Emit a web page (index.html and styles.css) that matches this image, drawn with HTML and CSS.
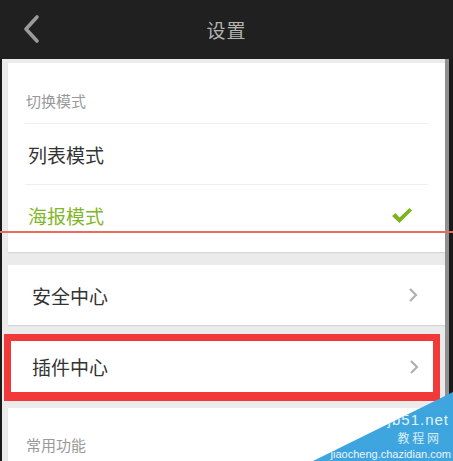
FILE: index.html
```html
<!DOCTYPE html>
<html lang="zh-CN">
<head>
  <meta charset="UTF-8" />
  <meta name="viewport" content="width=device-width, initial-scale=1.0"/>
  <title>设置</title>
  <link rel="stylesheet" href="styles.css">
</head>
<body>

<header>
  <div class="back">
    <svg width="20" height="30" viewBox="0 0 20 30"><polyline points="15,3 4,15 15,27" fill="none" stroke="#9a9a9a" stroke-width="3.6" stroke-linecap="round" stroke-linejoin="round"/></svg>
  </div>
  <h3>设置</h3>
</header>

<div class="app">
  <div class="main">
    <div class="card mode-card">
      <div class="label">切换模式</div>
      <div class="row">列表模式</div>
      <div class="row active">
        <span>海报模式</span>
        <svg class="check" width="22" height="17" viewBox="0 0 22 17"><path d="M1 9 L4.5 6 L8.5 10.5 L18.5 1 L21 3.5 L8.5 16 Z" fill="#7db31f"/></svg>
      </div>
    </div>

    <div class="card link">
      <span>安全中心</span>
      <svg width="10" height="16" viewBox="0 0 10 16"><polyline points="2,2 8,8 2,14" fill="none" stroke="#b0b0b0" stroke-width="2.2"/></svg>
    </div>

    <div class="highlight">
      <div class="card link inner">
        <span>插件中心</span>
        <svg width="10" height="16" viewBox="0 0 10 16"><polyline points="2,2 8,8 2,14" fill="none" stroke="#b0b0b0" stroke-width="2.2"/></svg>
      </div>
    </div>

    <div class="card last">
      <div class="label">常用功能</div>
    </div>
  </div>
  <div class="scrollbar"></div>
</div>

<div class="red-line"></div>

<div class="watermark">
  <div class="wm-site">jb51.net</div>
  <div class="wm-name">教 程 网</div>
  <div class="wm-url">jiaocheng.chazidian.com</div>
</div>

</body>
</html>
```

FILE: styles.css
```css
body {
  margin: 0;
  width: 453px;
  height: 461px;
  overflow: hidden;
  position: relative;
  font-family: "Noto Sans CJK SC", "Noto Sans", sans-serif;
  background: #ebebeb;
  color: #333;
}
header {
  height: 59px;
  background: #202020;
  display: flex;
  align-items: center;
  justify-content: center;
  position: relative;
}
header h3 {
  margin: 0;
  font-weight: normal;
  font-size: 19px;
  color: #b3b3b3;
  letter-spacing: 1px;
}
.back {
  position: absolute;
  left: 22px;
  top: 14px;
}
.app {
  display: flex;
  height: 402px;
  border-left: 2px solid #1a1a1a;
  border-right: 4px solid #1a1a1a;
}
.main {
  flex: 1;
  padding-top: 4px;
}
.scrollbar {
  width: 4px;
  background: #8f8f8f;
}
.card {
  background: #fff;
  margin-left: 6px;
  box-shadow: 0 1px 1px #d6d6d6;
}
.mode-card {
  height: 189px;
  padding: 0 17px;
}
.label {
  height: 60px;
  line-height: 76px;
  font-size: 15px;
  color: #999;
  border-bottom: 1px solid #efefef;
}
.mode-card .label { padding-left: 1px; }
.row {
  height: 60px;
  display: flex;
  align-items: center;
  justify-content: space-between;
  font-size: 19px;
  padding-left: 3px;
  border-bottom: 1px solid #efefef;
}
.row.active {
  border-bottom: none;
  color: #82b629;
}
.check {
  margin-right: 15px;
}
.link {
  margin-top: 13px;
  height: 60px;
  display: flex;
  align-items: center;
  justify-content: space-between;
  padding: 0 27px 0 24px;
  font-size: 19px;
  color: #333;
}
.highlight {
  margin: 9px 5px 0 2px;
  border: 7px solid #f2393a;
  border-bottom-width: 9px;
}
.highlight .inner {
  margin: 0;
  height: 51px;
  box-shadow: none;
  padding: 0 14px 0 21px;
}
.last {
  margin-top: 7px;
  height: 60px;
  padding: 0 18px;
}
.last .label {
  border-bottom: none;
  line-height: 74px;
}
.red-line {
  position: absolute;
  left: 0;
  right: 0;
  top: 231px;
  height: 2px;
  background: #ea6a5c;
}
.watermark {
  position: absolute;
  left: 300px;
  top: 390px;
  width: 153px;
  height: 71px;
  background: #3ea5df;
  clip-path: polygon(13px 71px, 153px 2px, 153px 71px);
  color: #fff;
  font-family: "Liberation Sans", sans-serif;
}
.wm-site {
  position: absolute;
  right: 4px;
  top: 22px;
  font-size: 15px;
  line-height: 15px;
  letter-spacing: 1px;
  opacity: 0.85;
}
.wm-name {
  position: absolute;
  right: 14px;
  top: 41px;
  font-size: 12px;
  line-height: 13px;
  font-family: "Noto Sans CJK SC", sans-serif;
  color: #d8eef9;
}
.wm-url {
  position: absolute;
  right: 2px;
  top: 58px;
  font-size: 11px;
  line-height: 12px;
  opacity: 0.9;
}
```
